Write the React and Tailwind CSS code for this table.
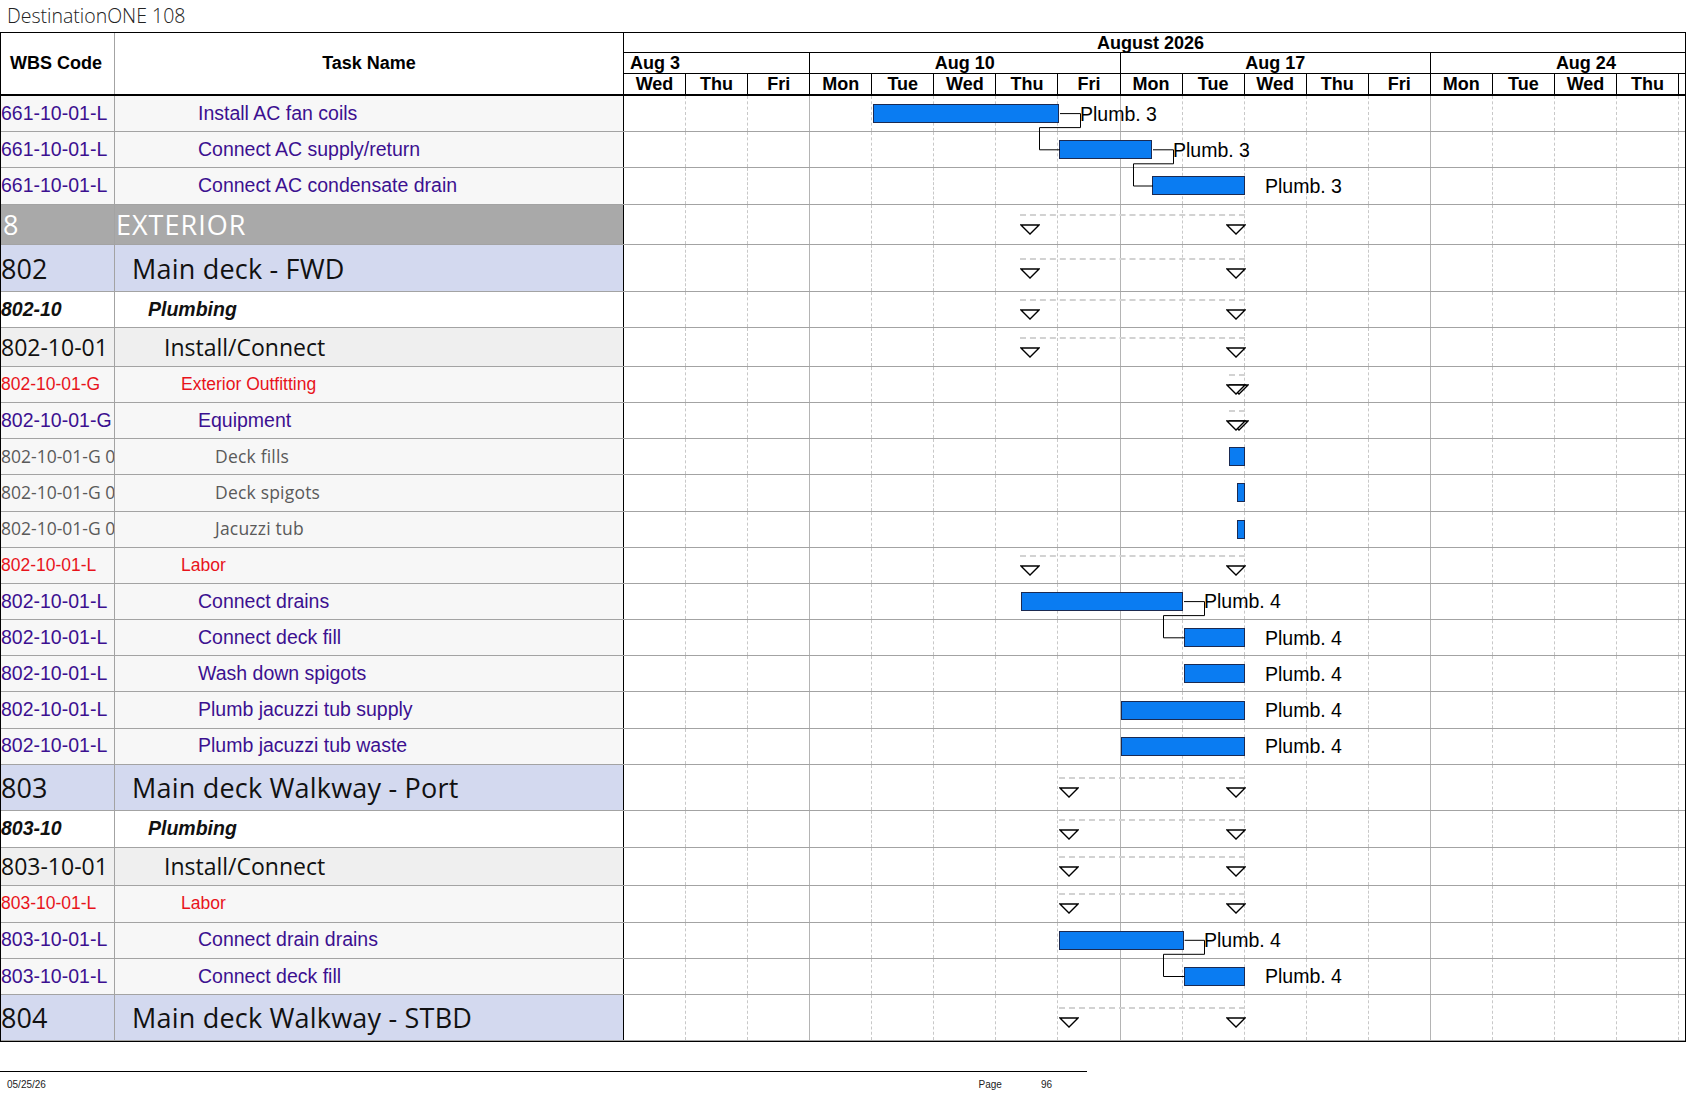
import React from "react";

const DW = 62.07;
const BAR_H = 19;

// chart-relative x positions (px from the left edge of the gantt)
const SUM_A = [396, 621];
const SUM_B = [435, 621];

const rows = [
  { wbs: "661-10-01-L", name: "Install AC fan coils", type: "task", bar: [249, 435], label: 456 },
  { wbs: "661-10-01-L", name: "Connect AC supply/return", type: "task", bar: [435, 528], label: 549 },
  { wbs: "661-10-01-L", name: "Connect AC condensate drain", type: "task", bar: [528, 621], label: 641 },
  { wbs: "8", name: "EXTERIOR", type: "exterior", sum: SUM_A },
  { wbs: "802", name: "Main deck - FWD", type: "big", sum: SUM_A },
  { wbs: "802-10", name: "Plumbing", type: "plumbing", sum: SUM_A },
  { wbs: "802-10-01", name: "Install/Connect", type: "install", sum: SUM_A },
  { wbs: "802-10-01-G", name: "Exterior Outfitting", type: "cat", sum: [605, 621] },
  { wbs: "802-10-01-G", name: "Equipment", type: "task", sum: [605, 621] },
  { wbs: "802-10-01-G 0", name: "Deck fills", type: "item", bar: [605, 621] },
  { wbs: "802-10-01-G 0", name: "Deck spigots", type: "item", bar: [613, 621] },
  { wbs: "802-10-01-G 0", name: "Jacuzzi tub", type: "item", bar: [613, 621] },
  { wbs: "802-10-01-L", name: "Labor", type: "cat", sum: SUM_A },
  { wbs: "802-10-01-L", name: "Connect drains", type: "task", bar: [396.7, 559], label: 580, text: "Plumb. 4" },
  { wbs: "802-10-01-L", name: "Connect deck fill", type: "task", bar: [559.6, 621], label: 641, text: "Plumb. 4" },
  { wbs: "802-10-01-L", name: "Wash down spigots", type: "task", bar: [559.6, 621], label: 641, text: "Plumb. 4" },
  { wbs: "802-10-01-L", name: "Plumb jacuzzi tub supply", type: "task", bar: [497, 621], label: 641, text: "Plumb. 4" },
  { wbs: "802-10-01-L", name: "Plumb jacuzzi tub waste", type: "task", bar: [497, 621], label: 641, text: "Plumb. 4" },
  { wbs: "803", name: "Main deck Walkway - Port", type: "big", sum: SUM_B },
  { wbs: "803-10", name: "Plumbing", type: "plumbing", sum: SUM_B },
  { wbs: "803-10-01", name: "Install/Connect", type: "install", sum: SUM_B },
  { wbs: "803-10-01-L", name: "Labor", type: "cat", sum: SUM_B },
  { wbs: "803-10-01-L", name: "Connect drain drains", type: "task", bar: [435, 559.6], label: 580, text: "Plumb. 4" },
  { wbs: "803-10-01-L", name: "Connect deck fill", type: "task", bar: [559.6, 621], label: 641, text: "Plumb. 4" },
  { wbs: "804", name: "Main deck Walkway - STBD", type: "big", sum: SUM_B },
];

// links between consecutive rows: vertical x, horizontal jog x
const links = [
  { from: 0, vx: 455, hx: 414 },
  { from: 1, vx: 548, hx: 508 },
  { from: 13, vx: 579, hx: 538 },
  { from: 22, vx: 579, hx: 538 },
];

const HEIGHTS = {
  task: 36.2,
  cat: 36.2,
  item: 36.2,
  exterior: 40.7,
  big: 46.5,
  plumbing: 36.5,
  install: 38.5,
};

const STYLE = {
  task: {
    bg: "bg-[#f7f7f7]",
    wbs: "font-['Liberation_Sans',Arial,sans-serif] text-[19.5px] text-[#3c1090]",
    name: "font-['Liberation_Sans',Arial,sans-serif] text-[19.5px] text-[#3c1090] pl-[83px]",
  },
  cat: {
    bg: "bg-[#f7f7f7]",
    wbs: "font-['Liberation_Sans',Arial,sans-serif] text-[17.5px] text-[#e8131b]",
    name: "font-['Liberation_Sans',Arial,sans-serif] text-[17.5px] text-[#e8131b] pl-[66px]",
  },
  item: {
    bg: "bg-[#f7f7f7]",
    wbs: "font-['Open_Sans',sans-serif] text-[17.5px] text-[#5a5a5a]",
    name: "font-['Open_Sans',sans-serif] text-[17.5px] text-[#5a5a5a] pl-[100px] tracking-[0.2px]",
  },
  exterior: {
    bg: "bg-[#a9a9a9]",
    wbs: "font-['Open_Sans',sans-serif] text-[27px] text-white pl-[2px]",
    name: "font-['Open_Sans',sans-serif] text-[27px] text-white pl-[1px] tracking-[1px]",
  },
  big: {
    bg: "bg-[#d3d9ef]",
    wbs: "font-['Open_Sans',sans-serif] text-[27px] text-[#111]",
    name: "font-['Open_Sans',sans-serif] text-[27px] text-[#111] pl-[17px] tracking-[0.2px]",
  },
  plumbing: {
    bg: "bg-white",
    wbs: "font-['Liberation_Sans',Arial,sans-serif] text-[19.5px] font-bold italic text-[#111]",
    name: "font-['Liberation_Sans',Arial,sans-serif] text-[19.5px] font-bold italic text-[#111] pl-[33px]",
  },
  install: {
    bg: "bg-[#efefef]",
    wbs: "font-['Open_Sans',sans-serif] text-[23px] text-[#111]",
    name: "font-['Open_Sans',sans-serif] text-[23px] text-[#111] pl-[49px]",
  },
};

// the last column (Fri) is cut by the right border, so it has no label
const DAYS = ["Wed", "Thu", "Fri", "Mon", "Tue", "Wed", "Thu", "Fri", "Mon", "Tue", "Wed", "Thu", "Fri", "Mon", "Tue", "Wed", "Thu", ""];
const WEEK_END = [2, 7, 12, 17];

// cumulative geometry
let acc = 0;
const geo = rows.map((r) => {
  const h = HEIGHTS[r.type];
  const g = { top: acc, h, mid: acc + h / 2 };
  acc += h;
  return g;
});
const BODY_H = acc;

function Tri({ x, y }) {
  return (
    <svg className="absolute" style={{ left: x, top: y }} width="20" height="11" viewBox="0 0 20 11">
      <polygon points="1,1 19,1 10,10" fill="white" stroke="black" strokeWidth="1.3" />
    </svg>
  );
}

function DayGrid() {
  return (
    <div className="flex h-full">
      {DAYS.map((d, i) => (
        <div
          key={i}
          className={
            WEEK_END.includes(i)
              ? "w-[62.07px] shrink-0 h-full border-r border-[#b4b4b4]"
              : "w-[62.07px] shrink-0 h-full border-r border-dashed border-[#c8c8c8]"
          }
        />
      ))}
    </div>
  );
}

function ChartCell({ row, h }) {
  const mid = h / 2;
  return (
    <div className="relative flex-1 h-full overflow-hidden bg-white">
      <DayGrid />
      {row.sum ? (
        <>
          <div
            className="absolute border-t-2 border-dashed border-[#d2d2d2]"
            style={{ left: row.sum[0], width: row.sum[1] - row.sum[0], top: mid - 11 }}
          />
          <Tri x={row.sum[0] - 0.5} y={mid - 1} />
          <Tri x={row.sum[1] - 19.5} y={mid - 1} />
        </>
      ) : null}
      {row.bar ? (
        <div
          className="absolute bg-[#0a7cf2] border border-[#1b2a52]"
          style={{ left: row.bar[0], width: row.bar[1] - row.bar[0], top: mid - BAR_H / 2 - 0.5, height: BAR_H }}
        />
      ) : null}
      {row.label ? (
        <span
          className="absolute font-['Liberation_Sans',Arial,sans-serif] text-[19.5px] leading-[20px] text-black whitespace-nowrap"
          style={{ left: row.label, top: mid - 10.5 }}
        >
          {row.text || "Plumb. 3"}
        </span>
      ) : null}
    </div>
  );
}

function Row({ row, g }) {
  const s = STYLE[row.type];
  return (
    <div className="flex border-b border-[#a3a3a3]" style={{ height: g.h }}>
      <div className={`w-[114px] shrink-0 h-full flex items-center overflow-hidden whitespace-nowrap border-r border-[#a3a3a3] leading-none ${s.bg} ${s.wbs}`}>
        {row.wbs}
      </div>
      <div className={`w-[509px] shrink-0 h-full flex items-center overflow-hidden whitespace-nowrap border-r border-black leading-none ${s.bg} ${s.name}`}>
        {row.name}
      </div>
      <ChartCell row={row} h={g.h} />
    </div>
  );
}

function Links() {
  return (
    <svg className="absolute left-[624px] top-0 pointer-events-none" width="1061" height={BODY_H}>
      {links.map((l, i) => {
        const a = rows[l.from];
        const b = rows[l.from + 1];
        const ga = geo[l.from];
        const gb = geo[l.from + 1];
        const barBottom = ga.mid + BAR_H / 2 - 0.5;
        const d = `M${a.bar[1]},${ga.mid - 0.5} H${l.vx + 0.5} M${l.vx + 0.5},${ga.mid - 0.5} V${barBottom + 4.5} H${l.hx + 0.5} V${gb.mid - 0.5} H${b.bar[0]}`;
        return <path key={i} d={d} fill="none" stroke="black" strokeWidth="1" />;
      })}
    </svg>
  );
}

function ChartHeader() {
  return (
    <div className="flex-1 flex flex-col overflow-hidden font-['Liberation_Sans',Arial,sans-serif] font-bold text-[18px] text-black leading-none">
      <div className="h-[20px] border-b border-black flex items-center pl-[473px] whitespace-nowrap">August 2026</div>
      <div className="h-[21px] border-b border-black flex">
        <div className="w-[186.2px] shrink-0 border-r border-black flex items-center pl-[6px]">Aug 3</div>
        <div className="w-[310.35px] shrink-0 border-r border-black flex items-center justify-center">Aug 10</div>
        <div className="w-[310.35px] shrink-0 border-r border-black flex items-center justify-center">Aug 17</div>
        <div className="w-[254px] shrink-0 flex items-center pl-[125px]">Aug 24</div>
      </div>
      <div className="h-[20px] flex">
        {DAYS.map((d, i) => (
          <div key={i} className="w-[62.07px] shrink-0 border-r border-black flex items-center justify-center">
            {d}
          </div>
        ))}
      </div>
    </div>
  );
}

export default function App() {
  return (
    <div className="w-[1687px] h-[1097px] bg-white overflow-hidden">
      <div className="h-[32px] flex items-center pl-[7px] font-['Open_Sans',sans-serif] font-light text-[19.5px] text-[#222] leading-none">
        DestinationONE 108
      </div>
      <div className="w-[1686px] border border-black">
        <div className="flex h-[63px] border-b-2 border-black">
          <div className="w-[114px] shrink-0 border-r border-[#a3a3a3] flex items-center pl-[9px] font-['Liberation_Sans',Arial,sans-serif] font-bold text-[18px]">
            WBS Code
          </div>
          <div className="w-[509px] shrink-0 border-r border-black flex items-center justify-center font-['Liberation_Sans',Arial,sans-serif] font-bold text-[18px]">
            Task Name
          </div>
          <ChartHeader />
        </div>
        <div className="relative">
          {rows.map((r, i) => (
            <Row key={i} row={r} g={geo[i]} />
          ))}
          <Links />
        </div>
      </div>
      <div className="mt-[29px] w-[1087px] border-t border-black flex items-center h-[26px] font-['Liberation_Sans',Arial,sans-serif] text-[10px] text-[#222]">
        <span className="pl-[7px]">05/25/26</span>
        <span className="ml-auto">Page</span>
        <span className="ml-[39px] mr-[35px]">96</span>
      </div>
    </div>
  );
}
